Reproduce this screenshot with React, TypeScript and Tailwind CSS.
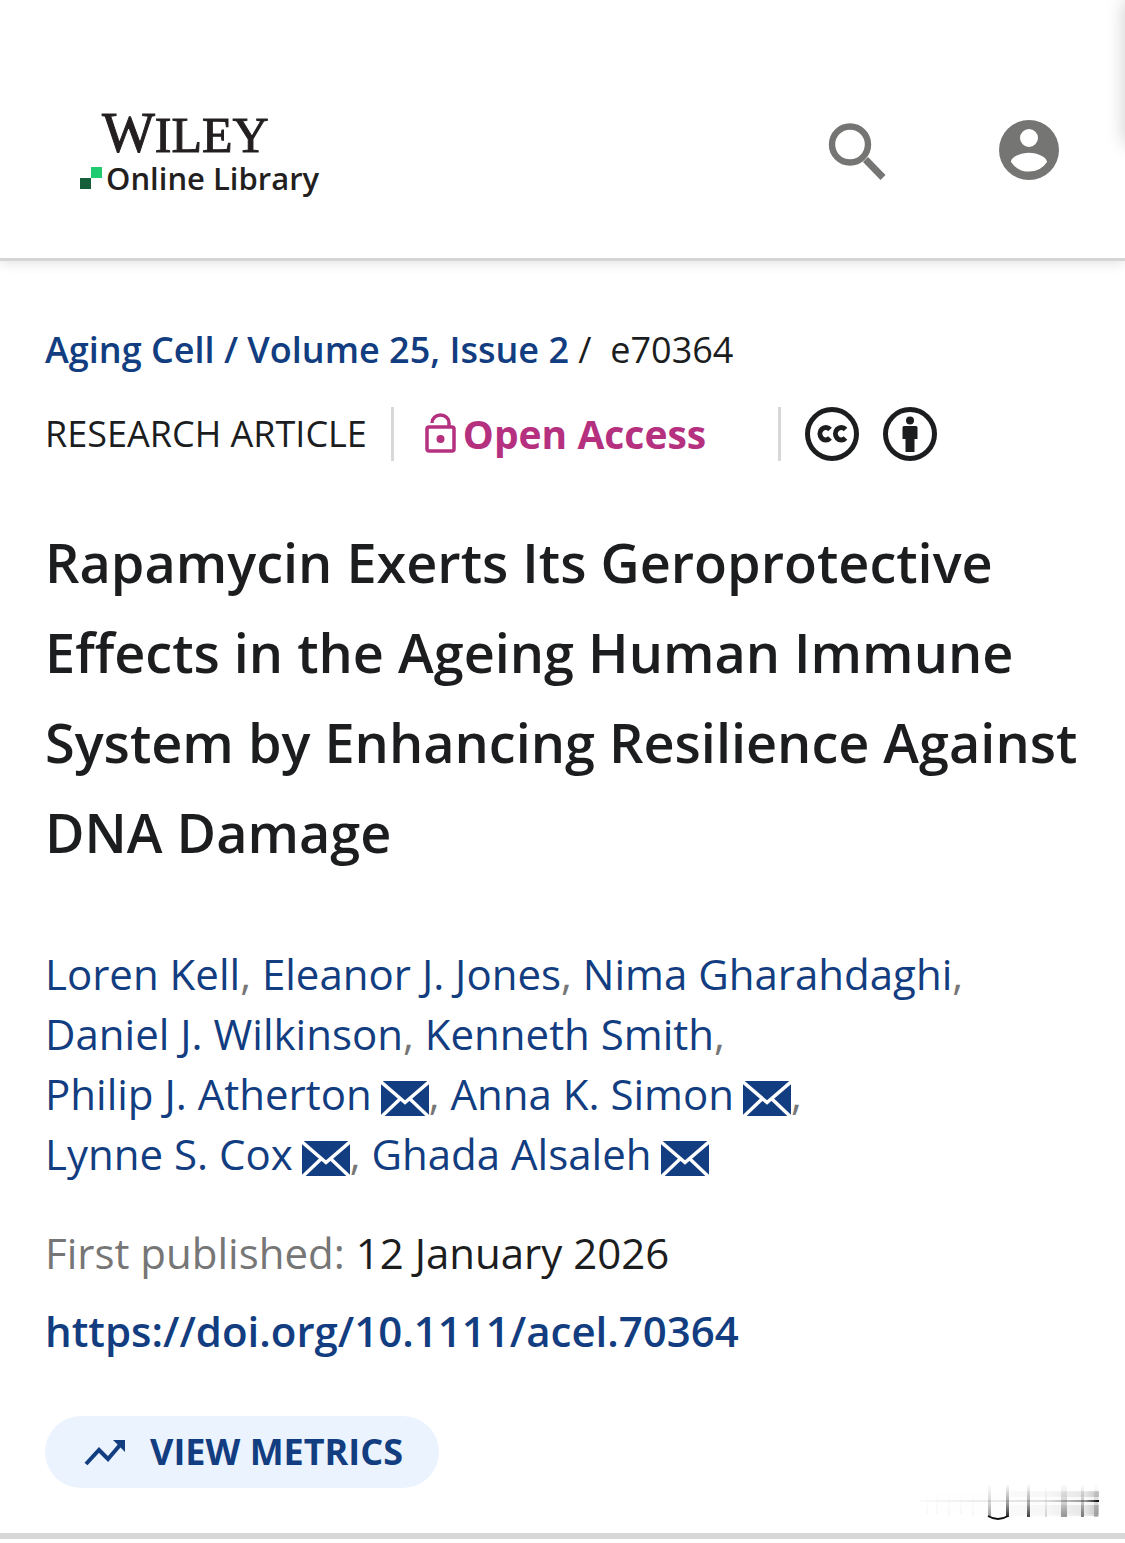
import type { ReactNode } from "react";

const authors = [
    { name: "Loren Kell" },
    { name: "Eleanor J. Jones" },
    { name: "Nima Gharahdaghi" },
    { name: "Daniel J. Wilkinson" },
    { name: "Kenneth Smith" },
    { name: "Philip J. Atherton", mail: true },
    { name: "Anna K. Simon", mail: true },
    { name: "Lynne S. Cox", mail: true },
    { name: "Ghada Alsaleh", mail: true },
];

export default function App(){
    return(
        <div className="relative overflow-hidden bg-white font-['Open_Sans',sans-serif] text-[#1c1d1e]">
            <Header/>
            <Article/>
            <div className="h-1.5 w-full bg-[#d8d8d8]"/>
            {/* closed side menu, only its shadow reaches the page */}
            <div className="absolute left-full top-0 h-36 w-80 shadow-[0_0_18px_rgba(0,0,0,0.2)]"/>
        </div>
    )
}

function Header(){
    return(
        <header className="flex h-[261px] items-start justify-between border-b-3 border-[#d5d5d5] pl-[78px] pr-[66px] pt-[108px] shadow-[0_2px_12px_rgba(0,0,0,0.12)]">
            <a href="#" className="block text-[#231f20]">
                <span className="ml-6 flex items-baseline font-['Liberation_Serif',serif] leading-[50px] [-webkit-text-stroke:1px_#231f20]">
                    <span className="text-[56px]">W</span>
                    <span className="text-[50px]">ILEY</span>
                </span>
                <span className="flex items-center gap-1 text-[31px] font-semibold leading-9">
                    <svg viewBox="0 0 24 24" className="size-6" aria-hidden="true">
                        <path d="M13 1h11v11H13z" fill="#20cc6f"/>
                        <path d="M2 12h11v11H2z" fill="#155f3b"/>
                    </svg>
                    Online Library
                </span>
            </a>
            <div className="flex gap-[105px] pt-3">
                <button aria-label="Search" className="size-[66px]">
                    <svg viewBox="0 0 66 66" fill="none" stroke="#757573" aria-hidden="true">
                        <circle cx="22" cy="24.500" r="18" strokeWidth="6.400"/>
                        <path d="M37.500 39.500L55 57.500" strokeWidth="7"/>
                    </svg>
                </button>
                <button aria-label="Log in" className="size-[60px]">
                    <svg viewBox="2 2 20 20" fill="#757573" aria-hidden="true">
                        <path d="M12 2a10 10 0 1 0 0 20 10 10 0 0 0 0-20zm0 3a3 3 0 1 1 0 6 3 3 0 0 1 0-6zm0 14.200a7.200 7.200 0 0 1-6-3.220c.03-1.990 4-3.080 6-3.080s5.970 1.090 6 3.080a7.200 7.200 0 0 1-6 3.220z"/>
                    </svg>
                </button>
            </div>
        </header>
    )
}

function Article(){
    return(
        <main className="px-[45px] pb-[45px] pt-[59px]">
            <nav className="text-4xl leading-[60px]">
                <Link>Aging Cell</Link>
                <span className="font-semibold text-[#123d80]"> / </span>
                <Link>Volume 25, Issue 2</Link>
                <span> /&nbsp; e70364</span>
            </nav>
            <div className="mt-6 flex h-[60px] items-center text-4xl">
                <span>RESEARCH ARTICLE</span>
                <div className="ml-6 h-[54px] w-[3px] bg-[#d8d8d8]"/>
                <span className="ml-[31px] flex items-center gap-1.5 text-[39px] font-bold text-[#b5317f]">
                    <LockIcon/>
                    Open Access
                </span>
                <div className="ml-[72px] h-[54px] w-[3px] bg-[#d8d8d8]"/>
                <a href="#" aria-label="Creative Commons" className="ml-6"><CcIcon/></a>
                <a href="#" aria-label="Attribution" className="ml-6"><ByIcon/></a>
            </div>
            <h1 className="mt-[53px] text-[54px] font-semibold leading-[90px]">
                Rapamycin Exerts Its Geroprotective Effects in the Ageing Human Immune System by Enhancing Resilience Against DNA Damage
            </h1>
            <div className="mt-[67px] text-[42px] leading-[60px] text-[#767676]">
                {authors.map((author, i) => (
                    <span key={author.name}>
                        <span className="whitespace-nowrap">
                            <a href="#" className="text-[#123d80]">
                                {author.name}
                                {author.mail && <MailIcon/>}
                            </a>
                            {i < authors.length - 1 && ","}
                        </span>{" "}
                    </span>
                ))}
            </div>
            <p className="mt-[39px] text-[42px] leading-[60px]">
                <span className="text-[#767676]">First published:</span> 12 January 2026
            </p>
            <p className="mt-[18px] text-[42px] leading-[60px]">
                <Link>https://doi.org/10.1111/acel.70364</Link>
            </p>
            <div className="mt-[55px] flex items-start justify-between">
                <button className="flex h-[72px] items-center gap-[21px] rounded-full bg-[#ebf3fe] px-9 text-4xl font-bold text-[#123d80]">
                    <svg viewBox="0 0 48 48" className="size-12" aria-hidden="true">
                        <path d="M5 36L18 22L27 31L39 17" fill="none" stroke="currentColor" strokeWidth="4"/>
                        <path d="M32 12h12v12z" fill="currentColor"/>
                    </svg>
                    VIEW METRICS
                </button>
                <Smudge/>
            </div>
        </main>
    )
}

function Link({ children }: { children: ReactNode }){
    return <a href="#" className="font-semibold text-[#123d80]">{children}</a>
}

function LockIcon(){
    return(
        <svg viewBox="0 0 32 42" className="h-[42px] w-8" fill="none" stroke="currentColor" strokeWidth="3.500" aria-hidden="true">
            <rect x="2" y="14" width="27" height="24" rx="2"/>
            <path d="M7 10a8.500 8 0 0 1 17 0v4"/>
            <circle cx="15.500" cy="26" r="4" fill="currentColor" stroke="none"/>
        </svg>
    )
}

function CcIcon(){
    return(
        <svg viewBox="0 0 54 54" className="size-[54px]" fill="none" stroke="#1c1d1e" aria-hidden="true">
            <circle cx="27" cy="27" r="24.500" strokeWidth="5"/>
            <path d="M25 22.500a5.800 6.200 0 1 0 0 8.500M40.500 22.500a5.800 6.200 0 1 0 0 8.500" strokeWidth="5"/>
        </svg>
    )
}

function ByIcon(){
    return(
        <svg viewBox="0 0 54 54" className="size-[54px]" fill="#1c1d1e" aria-hidden="true">
            <circle cx="27" cy="27" r="24.500" fill="none" stroke="#1c1d1e" strokeWidth="5"/>
            <circle cx="27" cy="13.500" r="4"/>
            <path d="M21 19h12q1.500 0 1.500 1.500V32h-3v13h-9V32h-3V20.500Q19.500 19 21 19z"/>
        </svg>
    )
}

function MailIcon(){
    return(
        <svg viewBox="0 0 48 36" className="ml-[9px] inline-block h-9 w-12 align-[-7px]" aria-hidden="true">
            <path d="M0 0h48v35H0z" fill="#123d80"/>
            <path d="M-1 0L24 21.500L49 0M-1 37L19 18M49 37L29 18" fill="none" stroke="white" strokeWidth="3.500"/>
        </svg>
    )
}

// faded stamp in the lower right corner
function Smudge(){
    return(
        <svg viewBox="0 0 180 38" className="-mr-5 mt-[68px] -mb-9 h-[38px] w-[180px]" aria-hidden="true">
            <defs>
                <linearGradient id="down" x1="0" y1="0" x2="0" y2="1">
                    <stop offset="0" stopColor="#000" stopOpacity="0"/>
                    <stop offset="0.600" stopColor="#000" stopOpacity="0.450"/>
                    <stop offset="1" stopColor="#000"/>
                </linearGradient>
                <linearGradient id="across" gradientUnits="userSpaceOnUse" x1="0" y1="0" x2="180" y2="0">
                    <stop offset="0" stopColor="#000" stopOpacity="0.020"/>
                    <stop offset="0.700" stopColor="#000" stopOpacity="0.120"/>
                    <stop offset="0.920" stopColor="#000" stopOpacity="0.400"/>
                    <stop offset="1" stopColor="#000"/>
                </linearGradient>
                <filter id="soft">
                    <feGaussianBlur stdDeviation="0.700 0.300"/>
                </filter>
            </defs>
            <path d="M0 8h179v22H0z" fill="url(#across)" opacity="0.060"/>
            <path d="M90 7h89v6H90zM90 21h89v11H90z" fill="url(#across)" opacity="0.200"/>
            <path d="M0 16h179v2H0z" fill="url(#across)"/>
            <g fill="url(#down)" filter="url(#soft)">
                <path d="M68 0h3v33h-3z" opacity="0.400"/>
                <path d="M86 0h3v33h-3z" opacity="0.850"/>
                <path d="M107 0h3v33h-3z" opacity="0.750"/>
                <path d="M125 0h2v33h-2z" opacity="0.150"/>
                <path d="M141 0h6v33h-6z" opacity="0.400"/>
                <path d="M161 0h3v33h-3z" opacity="0.500"/>
                <path d="M174 0h4v33h-4z" opacity="0.250"/>
                <path d="M6 8h2v22H6zM16 8h2v22h-2zM28 8h2v24h-2zM40 8h2v22h-2zM52 8h2v24h-2z" opacity="0.030"/>
            </g>
            <path d="M68 32q10 6 20 0" fill="none" stroke="#111" strokeWidth="2"/>
        </svg>
    )
}
